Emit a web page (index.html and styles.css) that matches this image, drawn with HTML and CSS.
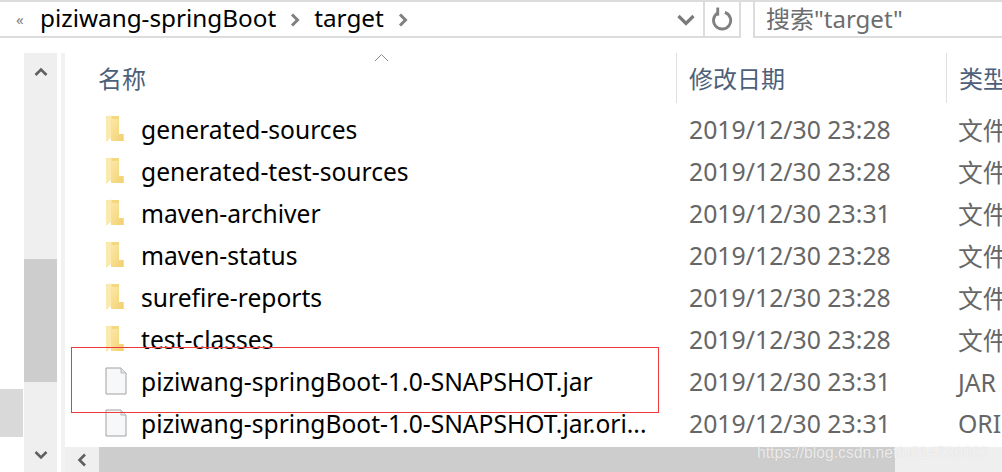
FILE: index.html
```html
<!DOCTYPE html>
<html lang="zh">
<head>
<meta charset="utf-8">
<title>target</title>
<link rel="stylesheet" href="styles.css">
</head>
<body>
<svg class="defs" width="0" height="0">
  <defs>
    <linearGradient id="fg" x1="0" y1="0" x2="1" y2="1">
      <stop offset="0" stop-color="#fbe8a6"/>
      <stop offset="1" stop-color="#f2cf6e"/>
    </linearGradient>
    <symbol id="folder" viewBox="0 0 22 28">
      <path d="M1 1h13.500v17.500H18.500V26H6V22L1 26.500z" fill="#f5d77f"/>
      <path d="M1 1.500L6.500 0.500V22.500L1 27z" fill="#fbeaae"/>
      <path d="M14 1H18.500V19L14 19z" fill="#fff"/>
      <path d="M6.500 4H14V19L18.500 19V26H6.500z" fill="url(#fg)"/>
    </symbol>
    <symbol id="file" viewBox="0 0 22 28">
      <path d="M1 1H16L21 6V27H1z" fill="#f6f8fa" stroke="#a0a0a0" stroke-width="1"/>
      <path d="M16 1V6H21" fill="#e4e4e4" stroke="#b8b8b8" stroke-width="1"/>
    </symbol>
  </defs>
</svg>

<header class="toolbar">
  <div class="crumbs">
    <span class="more">«</span>
    <span class="crumb">piziwang-springBoot</span>
    <svg class="sep-arrow" viewBox="0 0 10 14"><path d="M2 1.500L7.500 7 2 12.500" fill="none" stroke="#808080" stroke-width="3"/></svg>
    <span class="crumb">target</span>
    <svg class="sep-arrow" viewBox="0 0 10 14"><path d="M2 1.500L7.500 7 2 12.500" fill="none" stroke="#808080" stroke-width="3"/></svg>
    <svg class="drop" viewBox="0 0 18 12"><path d="M1.500 2L9 9.500 16.500 2" fill="none" stroke="#7a7a7a" stroke-width="3.200"/></svg>
  </div>
  <div class="refresh">
    <svg viewBox="0 0 22 24" class="refresh-icon"><path d="M6.500 5.500A9 9 0 1 0 13.500 5" fill="none" stroke="#808080" stroke-width="3"/><path d="M6 0V8.500" fill="none" stroke="#808080" stroke-width="3"/></svg>
  </div>
  <div class="search">搜索"target"</div>
</header>

<main class="body">
  <aside class="nav"><div class="nav-sel"></div></aside>
  <div class="vscroll">
    <svg class="v-arrow" viewBox="0 0 14 10"><path d="M1.500 8L7 2.500 12.500 8" fill="none" stroke="#606060" stroke-width="2.600"/></svg>
    <div class="v-track"><div class="v-thumb"></div></div>
    <svg class="v-arrow" viewBox="0 0 14 10"><path d="M1.500 2L7 7.500 12.500 2" fill="none" stroke="#606060" stroke-width="2.600"/></svg>
  </div>
  <section class="pane">
    <div class="head">
      <div class="col-name">名称<svg class="sort" viewBox="0 0 15 9"><path d="M1 8L7.500 1.500 14 8" fill="none" stroke="#8a8a8a" stroke-width="1"/></svg></div>
      <div class="col-date">修改日期</div>
      <div class="col-type">类型</div>
    </div>
    <div class="rows">
      <div class="row"><svg class="icon"><use href="#folder"/></svg><span class="name">generated-sources</span><span class="date">2019/12/30 23:28</span><span class="type">文件夹</span></div>
      <div class="row"><svg class="icon"><use href="#folder"/></svg><span class="name">generated-test-sources</span><span class="date">2019/12/30 23:28</span><span class="type">文件夹</span></div>
      <div class="row"><svg class="icon"><use href="#folder"/></svg><span class="name">maven-archiver</span><span class="date">2019/12/30 23:31</span><span class="type">文件夹</span></div>
      <div class="row"><svg class="icon"><use href="#folder"/></svg><span class="name">maven-status</span><span class="date">2019/12/30 23:28</span><span class="type">文件夹</span></div>
      <div class="row"><svg class="icon"><use href="#folder"/></svg><span class="name">surefire-reports</span><span class="date">2019/12/30 23:28</span><span class="type">文件夹</span></div>
      <div class="row"><svg class="icon"><use href="#folder"/></svg><span class="name">test-classes</span><span class="date">2019/12/30 23:28</span><span class="type">文件夹</span></div>
      <div class="row"><svg class="icon"><use href="#file"/></svg><span class="name">piziwang-springBoot-1.0-SNAPSHOT.jar</span><span class="date">2019/12/30 23:31</span><span class="type">JAR 文件</span></div>
      <div class="row"><svg class="icon"><use href="#file"/></svg><span class="name">piziwang-springBoot-1.0-SNAPSHOT.jar.ori...</span><span class="date">2019/12/30 23:31</span><span class="type">ORIGINAL</span></div>
    </div>
    <div class="hscroll">
      <div class="h-btn"><svg class="h-arrow" viewBox="0 0 10 14"><path d="M8 1.500L2.500 7 8 12.500" fill="none" stroke="#606060" stroke-width="2.600"/></svg></div>
      <div class="h-thumb"></div>
    </div>
  </section>
</main>

<div class="redbox"></div>
<div class="watermark">https://blog.csdn.net/u014736082</div>
</body>
</html>
```
FILE: styles.css
```css
* { box-sizing: border-box; }
html, body { margin: 0; padding: 0; }
body {
  width: 1002px;
  height: 472px;
  overflow: hidden;
  position: relative;
  background: #fff;
  font-family: "Noto Sans", "Noto Sans CJK SC", sans-serif;
  color: #000;
}
.defs { position: absolute; }

.toolbar {
  height: 38px;
  display: flex;
  border-top: 2px solid #dcdcdc;
}
.crumbs {
  width: 703px;
  display: flex;
  align-items: center;
  border-bottom: 2px solid #dcdcdc;
  padding-left: 16px;
  font-size: 24.300px;
  white-space: nowrap;
}
.more { width: 24px; color: #808080; font-size: 15px; }
.crumb { line-height: 32px; margin-top: -2px; }
.sep-arrow { width: 10px; height: 14px; margin: 1px 14px 0 14px; }
.drop { width: 18px; height: 12px; margin: 2px 8px 0 auto; }
.refresh {
  width: 38px;
  border: 2px solid #dcdcdc;
  border-top: 0;
  display: flex;
  align-items: center;
  justify-content: center;
}
.refresh-icon { width: 21px; height: 24px; }
.search {
  margin-left: 12px;
  flex: 1;
  border: 2px solid #dcdcdc;
  border-top: 0;
  border-right: 0;
  padding-left: 11px;
  font-size: 24px;
  line-height: 34px;
  color: #6d6d6d;
  white-space: nowrap;
}

.body {
  height: 434px;
  display: flex;
}
.nav {
  width: 24px;
  display: flex;
  flex-direction: column;
  justify-content: flex-end;
  padding-bottom: 35px;
}
.nav-sel { height: 48px; width: 23px; background: #d9d9d9; }
.vscroll {
  width: 33px;
  margin-top: 15px;
  background: #efefef;
  display: flex;
  flex-direction: column;
  align-items: center;
}
.v-arrow { width: 14px; height: 10px; flex: none; margin: 14px 0 12px; }
.v-track { flex: 1; width: 100%; padding-top: 170px; padding-bottom: 54px; margin-bottom: -10px; }
.v-thumb { height: 123px; background: #cdcdcd; }
.pane {
  flex: 1;
  min-width: 0;
  margin-left: 4px;
  border-left: 4px solid #f2f2f2;
  margin-top: 15px;
  display: flex;
  flex-direction: column;
  position: relative;
}
.head {
  height: 50px;
  display: flex;
  color: #4c607a;
  font-size: 24px;
  white-space: nowrap;
}
.col-name { flex: none; width: 611px; padding-left: 33px; line-height: 52px; position: relative; }
.sort { position: absolute; left: 309px; top: 0; width: 15px; height: 9px; }
.col-date { flex: none; width: 270px; padding-left: 12px; border-left: 1px solid #e0e0e0; line-height: 52px; }
.col-type { flex: none; width: 60px; padding-left: 12px; border-left: 1px solid #e0e0e0; line-height: 52px; }
.rows { flex: 1; padding-top: 5px; overflow: hidden; }
.row {
  height: 42px;
  display: flex;
  align-items: center;
  font-size: 24.800px;
  white-space: nowrap;
}
.icon { width: 22px; height: 28px; margin-left: 40px; flex: none; }
.name { width: 548px; margin-left: 14px; flex: none; font-size: 24.600px; }
.date { width: 269px; color: #666; flex: none; }
.type { color: #666; }
.hscroll {
  height: 25px;
  background: #efefef;
  display: flex;
  flex: none;
}
.h-btn { width: 34px; display: flex; align-items: center; justify-content: center; }
.h-arrow { width: 10px; height: 14px; }
.h-thumb { width: 796px; background: #cdcdcd; }

.redbox {
  position: absolute;
  left: 71px;
  top: 347px;
  width: 588px;
  height: 66px;
  border: 1px solid #ee3a3a;
}
.watermark {
  position: absolute;
  left: 757px;
  top: 441px;
  font-family: "Liberation Sans", sans-serif;
  font-size: 15.700px;
  line-height: 24px;
  color: rgba(255, 255, 255, 0.7);
  text-shadow: 0 0 1px rgba(150, 150, 150, 0.3);
  white-space: nowrap;
}
```
